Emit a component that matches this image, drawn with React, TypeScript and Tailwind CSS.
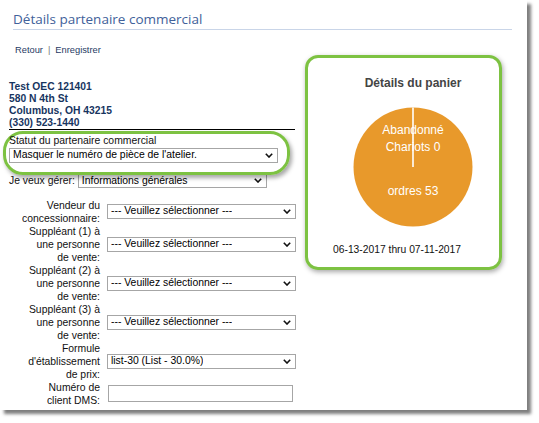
import React from 'react';

const labelFont = { fontFamily: '"Liberation Sans", Arial, sans-serif' };

const Chevron = () => (
  <svg width="8" height="5" viewBox="0 0 8 5" className="shrink-0">
    <polyline points="0.8,0.8 4,4 7.2,0.8" fill="none" stroke="#111" strokeWidth="1.6" />
  </svg>
);

interface SelectBoxProps {
  value: string;
  width: string;
  height?: string;
}

const SelectBox: React.FC<SelectBoxProps> = ({ value, width, height = 'h-[15px]' }) => (
  <div
    className={`${width} ${height} flex items-center justify-between border border-[#a6a6a6] bg-white pl-[3px] pr-[4px] text-[10.4px] leading-none text-black`}
  >
    <span className="truncate">{value}</span>
    <Chevron />
  </div>
);

const rows: { label: string[]; value?: string }[] = [
  { label: ['Vendeur du', 'concessionnaire:'], value: '--- Veuillez sélectionner ---' },
  { label: ['Suppléant (1) à', 'une personne', 'de vente:'], value: '--- Veuillez sélectionner ---' },
  { label: ['Suppléant (2) à', 'une personne', 'de vente:'], value: '--- Veuillez sélectionner ---' },
  { label: ['Suppléant (3) à', 'une personne', 'de vente:'], value: '--- Veuillez sélectionner ---' },
  { label: ['Formule', "d'établissement", 'de prix:'], value: 'list-30 (List - 30.0%)' },
  { label: ['Numéro de', 'client DMS:'] },
];

const PieChart = () => (
  <svg width="120" height="120" viewBox="0 0 120 120" style={labelFont}>
    <circle cx="60" cy="60" r="59.5" fill="#e8992b" />
    <g fill="#ffffff" fontSize="12" textAnchor="middle">
      <text x="60" y="27">Abandonné</text>
      <text x="60" y="44">Chariots 0</text>
      <text x="60" y="88">ordres 53</text>
    </g>
    <line x1="60" y1="0.5" x2="60" y2="60" stroke="#ffffff" strokeWidth="1.6" />
  </svg>
);

export default function App() {
  return (
    <div className="w-[539px] h-[423px] bg-white" style={labelFont}>
      <div className="w-[527px] h-[410px] bg-white shadow-[4px_4px_3px_rgba(0,0,0,0.5)]">
        {/* Header */}
        <div className="pt-[9px] pl-[13px]">
          <div
            className="w-[499px] h-[21px] border-b border-[#c9d5e8] text-[13.5px] leading-[20px] text-[#41619a]"
            style={{ fontFamily: '"Open Sans", "Noto Sans", sans-serif' }}
          >
            Détails partenaire commercial
          </div>
        </div>

        <div className="flex items-start">
          {/* Left column */}
          <div className="w-[305px]">
            <div className="mt-[14px] pl-[15px] flex items-center text-[9.3px] leading-[12px] text-[#1f3a64]">
              <span>Retour</span>
              <span className="mx-[5px] text-[#777]">|</span>
              <span>Enregistrer</span>
            </div>

            <div className="mt-[25px] pl-[9px] text-[10.3px] leading-[12px] font-bold text-[#17355f]">
              <div>Test OEC 121401</div>
              <div>580 N 4th St</div>
              <div>Columbus, OH 43215</div>
              <div>(330) 523-1440</div>
            </div>
            <div className="ml-[9px] w-[286px] h-px bg-black" />

            <div className="mt-[1px] ml-[3px] w-[287px] h-[44px] rounded-[20px] border-[3px] border-[#7dc242] pl-[3px] pt-[1px] shadow-[2px_3px_4px_rgba(0,0,0,0.35)] relative z-10">
              <div className="text-[10.4px] leading-[12px] text-[#111]">Statut du partenaire commercial</div>
              <div className="mt-[1px]">
                <SelectBox value="Masquer le numéro de pièce de l'atelier." width="w-[269px]" />
              </div>
            </div>

            <div className="mt-[-2px] pl-[9px] flex items-center gap-[3px] text-[10.4px] text-[#111]">
              <span>Je veux gérer:</span>
              <SelectBox value="Informations générales" width="w-[189px]" />
            </div>

            <div className="mt-[10px] ml-[8px] grid grid-cols-[92px_189px] gap-x-[7px] text-[10.4px] leading-[13px] text-[#111]">
              {rows.map((row) => (
                <React.Fragment key={row.label.join(' ')}>
                  <div className="text-right">
                    {row.label.map((line) => (
                      <div key={line} className="whitespace-nowrap">{line}</div>
                    ))}
                  </div>
                  <div className="flex items-center">
                    {row.value ? (
                      <SelectBox value={row.value} width="w-[189px]" />
                    ) : (
                      <div className="ml-[1px] w-[185px] h-[17px] border border-[#a6a6a6] bg-white" />
                    )}
                  </div>
                </React.Fragment>
              ))}
            </div>
          </div>

          {/* Right column */}
          <div className="mt-[25px] w-[197px] h-[215px] rounded-[13px] border-[3px] border-[#7dc242] pl-[19px] shadow-[1px_2px_5px_rgba(0,0,0,0.35)]">
            <div className="flex flex-col items-center pt-[18px]">
              <div className="text-[12px] leading-[14px] font-bold text-[#444]">Détails du panier</div>
              <div className="mt-[17px]">
                <PieChart />
              </div>
            </div>
            <div className="mt-[17px] pl-[6px] text-[10.3px] leading-[12px] text-[#111]">
              06-13-2017 thru 07-11-2017
            </div>
          </div>
        </div>
      </div>
    </div>
  );
}
